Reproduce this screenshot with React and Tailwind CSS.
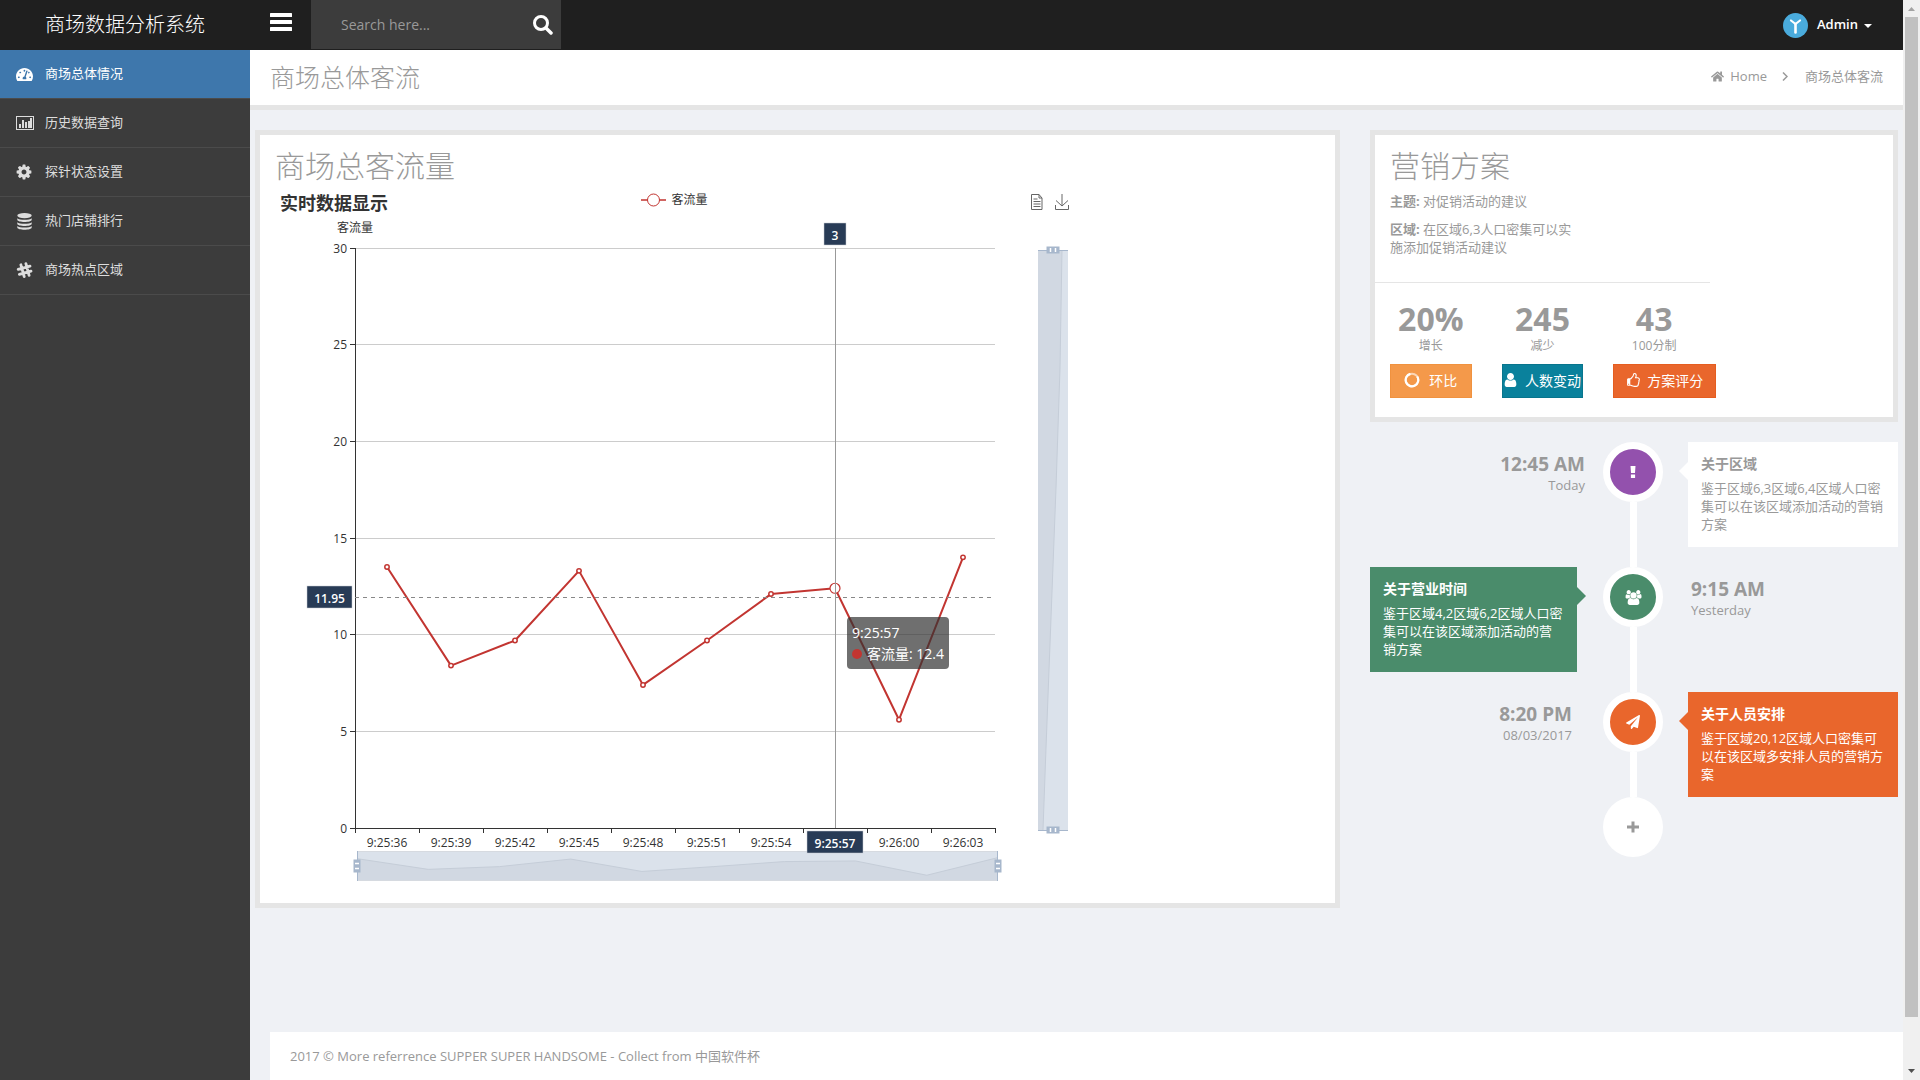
import React from "react";
import { FaTachometerAlt, FaHome, FaPaperPlane } from "react-icons/fa";

const SANS = "font-['Open_Sans','Noto_Sans_CJK_SC',sans-serif]";

function BarChartIcon() {
  return (
    <svg width="18" height="14" viewBox="0 0 18 14" aria-hidden="true">
      <rect x="0.5" y="0.5" width="17" height="13" fill="none" stroke="currentColor" />
      <path d="M3 8h2v4H3zM6 4h2v8H6zM9 6h2v6H9zM12 5h2v7h-2zM14 2h2v10h-2z" fill="currentColor" />
    </svg>
  );
}

function CogIcon() {
  return (
    <svg width="16" height="16" viewBox="64 64 1664 1664" fill="currentColor" aria-hidden="true">
      <path d="M1152 896q0-106-75-181t-181-75-181 75-75 181 75 181 181 75 181-75 75-181zm512-109v222q0 12-8 23t-20 13l-185 28q-19 54-39 91 35 50 107 138 10 12 10 25t-9 23q-27 37-99 108t-94 71q-12 0-26-9l-138-108q-44 23-91 38-16 136-29 186-7 28-36 28h-222q-14 0-24.500-8.500t-11.500-21.500l-28-184q-49-16-90-37l-141 107q-10 9-25 9-14 0-25-11-126-114-165-168-7-10-7-23 0-12 8-23 15-21 51-66.500t54-70.500q-27-50-41-99l-183-27q-13-2-21-12.500t-8-23.500v-222q0-12 8-23t19-13l186-28q14-46 39-92-40-57-107-138-10-12-10-24 0-10 9-23 26-36 98.500-107.500t94.500-71.500q13 0 26 10l138 107q44-23 91-38 16-136 29-186 7-28 36-28h222q14 0 24.500 8.500t11.500 21.500l28 184q49 16 90 37l142-107q9-9 24-9 13 0 25 10 129 119 165 170 7 8 7 22 0 12-8 23-15 21-51 66.500t-54 70.500q26 50 41 98l183 28q13 2 21 12.500t8 23.500z" />
    </svg>
  );
}

function HashIcon() {
  return (
    <svg width="17" height="17" viewBox="0 0 17 17" fill="none" stroke="currentColor" strokeWidth="2.800" strokeLinecap="round" aria-hidden="true">
      <path d="M4.900 2.800l3.300 11.800M9.900 1.600l3.200 11.800M2.200 7.400L14 4.200M3.400 12.300l11.600-3.200" />
    </svg>
  );
}

function DatabaseIcon() {
  return (
    <svg className="ml-px" width="15" height="17" viewBox="0 0 15 17" fill="currentColor" aria-hidden="true">
      <ellipse cx="7.5" cy="2.6" rx="7.2" ry="2.6" />
      <path d="M.3 5.2c2 2 12.400 2 14.400 0v1.600c0 3-14.400 3-14.400 0z" />
      <path d="M.3 9.200c2 2 12.400 2 14.400 0v1.600c0 3-14.400 3-14.400 0z" />
      <path d="M.3 13.100c2 2 12.400 2 14.400 0v1.400c0 3-14.400 3-14.400 0z" />
    </svg>
  );
}

function RingIcon() {
  return (
    <svg width="16" height="16" viewBox="0 0 16 16" fill="none" aria-hidden="true">
      <circle cx="8" cy="8" r="6.300" stroke="white" strokeOpacity="0.600" strokeWidth="2" />
      <path d="M6.400 1.900a6.300 6.300 0 1 0 6.800 2.600" stroke="white" strokeWidth="2.200" />
    </svg>
  );
}

function UserIcon() {
  return (
    <svg width="13" height="14" viewBox="256 128 1280 1536" fill="currentColor" aria-hidden="true">
      <path d="M1536 1399q0 109-62.500 187t-150.500 78h-854q-88 0-150.500-78t-62.500-187q0-85 8.500-160.500t31.500-152 58.500-131 94-89 134.500-34.500q131 128 313 128t313-128q76 0 134.500 34.500t94 89 58.500 131 31.500 152 8.500 160.500zm-256-887q0 159-112.500 271.500t-271.500 112.500-271.500-112.500-112.500-271.500 112.500-271.500 271.500-112.500 271.500 112.500 112.500 271.500z" />
    </svg>
  );
}

function ThumbIcon() {
  return (
    <svg width="15" height="15" viewBox="0 0 1792 1792" fill="currentColor" aria-hidden="true">
      <path d="M384 1344q0-26-19-45t-45-19-45 19-19 45 19 45 45 19 45-19 19-45zm1152-576q0-51-39-89.500t-89-38.500h-352q0-58 48-159.500t48-160.500q0-98-32-145t-128-47q-26 26-38 85t-30.500 125.500-59.500 109.500q-22 23-77 91-4 5-23 30t-31.500 41-34.500 42.500-40 44-38.500 35.500-40 27-35.500 9h-32v640h32q13 0 31.500 3t33 6.500 38 11 35 11.500 35.500 12.500 29 10.500q211 73 342 73h121q192 0 192-167 0-26-5-56 30-16 47.500-52.500t17.500-73.500-18-69q53-50 53-119 0-25-10-55.500t-25-47.500q32-1 53.500-47t21.500-81zm128-1q0 89-49 163 9 33 9 69 0 77-38 144 3 21 3 43 0 101-60 178 1 139-85 219.500t-227 80.500h-129q-96 0-189.500-22.500t-216.500-65.500q-116-40-138-40h-288q-53 0-90.500-37.500t-37.500-90.500v-640q0-53 37.500-90.500t90.500-37.500h274q36-24 137-155 58-75 107-128 24-25 35.500-85.500t30.500-126.500 62-108q39-37 90-37 84 0 151 32.500t102 101.500 35 186q0 93-48 192h176q104 0 180 76t76 179z" />
    </svg>
  );
}

function GroupIcon() {
  return (
    <svg width="17" height="15" viewBox="0 0 2048 1792" fill="currentColor" aria-hidden="true">
      <path d="M657 896q-162 5-265 128h-134q-82 0-138-40.500t-56-118.500q0-353 124-353 6 0 43.500 21t97.500 42.500 119 21.500q67 0 133-23-5 37-5 66 0 159 93 287zm1071 637q0 120-73 189.500t-194 69.500h-874q-121 0-194-69.500t-73-189.500q0-53 3.500-103.500t14-109 26.500-108.500 43-97.500 62-81 85.500-53.500 111.500-20q10 0 43 21.500t73 48 107 48 135 21.500 135-21.500 107-48 73-48 43-21.500q61 0 111.500 20t85.500 53.500 62 81 43 97.500 26.500 108.500 14 109 3.500 103.500zm-1024-1277q0 106-75 181t-181 75-181-75-75-181 75-181 181-75 181 75 75 181zm704 384q0 159-112.500 271.500t-271.500 112.500-271.500-112.500-112.500-271.500 112.500-271.500 271.500-112.500 271.500 112.500 112.500 271.500zm576 225q0 78-56 118.500t-138 40.500h-134q-103-123-265-128 93-128 93-287 0-29-5-66 66 23 133 23 59 0 119-21.500t97.500-42.500 43.500-21q124 0 124 353zm-128-609q0 106-75 181t-181 75-181-75-75-181 75-181 181-75 181 75 75 181z" />
    </svg>
  );
}

function ExclamationIcon() {
  return (
    <svg width="6" height="12" viewBox="0 0 6 12" fill="currentColor" aria-hidden="true">
      <path d="M.5 0h5L5 7H1zM.9 8.500h4.200V12H.9z" />
    </svg>
  );
}

function PlusIcon() {
  return (
    <svg width="12" height="12" viewBox="0 0 12 12" fill="currentColor" aria-hidden="true">
      <path d="M4.500.5h3v4H12v3H7.500v4h-3v-4H0v-3h4.500z" />
    </svg>
  );
}

const NAV = [
  { label: "商场总体情况", icon: <FaTachometerAlt size={17} />, active: true },
  { label: "历史数据查询", icon: <BarChartIcon /> },
  { label: "探针状态设置", icon: <CogIcon /> },
  { label: "热门店铺排行", icon: <DatabaseIcon /> },
  { label: "商场热点区域", icon: <HashIcon /> },
];

function Navbar() {
  return (
    <header className="flex h-[50px] bg-[#1f1f1f] text-white">
      <a href="#" className="w-[250px] pl-[45px] text-[20px] leading-[50px] font-light">商场数据分析系统</a>
      <button type="button" aria-label="切换菜单" className="flex h-11 w-[61px] items-center pl-[20px]">
        <svg width="22" height="18" viewBox="0 0 22 18" fill="white" aria-hidden="true">
          <rect width="22" height="4" rx="0.500" />
          <rect y="7" width="22" height="4" rx="0.500" />
          <rect y="14" width="22" height="4" rx="0.500" />
        </svg>
      </button>
      <form className="flex h-[49px] w-[250px] items-center bg-[#3c3c3c] pr-2" onSubmit={(e) => e.preventDefault()}>
        <input
          type="text"
          aria-label="Search"
          placeholder="Search here..."
          className="h-full min-w-0 flex-1 bg-transparent pl-[30px] text-[14px] outline-none placeholder:text-[#999999]"
        />
        <button type="submit" aria-label="Search">
          <svg width="20" height="20" viewBox="0 0 20 20" fill="none" stroke="white" aria-hidden="true">
            <circle cx="8" cy="8" r="6.500" strokeWidth="3" />
            <path d="M13 13l5 5" strokeWidth="3.500" strokeLinecap="round" />
          </svg>
        </button>
      </form>
      <button type="button" className="ml-auto mr-[31px] flex items-center text-[13px] font-semibold">
        <svg width="25" height="25" viewBox="0 0 25 25" aria-hidden="true">
          <circle cx="12.500" cy="12.500" r="12.500" fill="#4aabdc" />
          <path d="M12.500 11L8 7.500M12.500 11L17 7.500" stroke="white" strokeWidth="2.200" strokeLinecap="round" />
          <path d="M12.500 11v8.500" stroke="white" strokeWidth="2.600" strokeLinecap="round" />
        </svg>
        <span className="ml-[9px]">Admin</span>
        <svg className="ml-[6px] mt-0.5" width="8" height="4" viewBox="0 0 8 4" aria-hidden="true">
          <path d="M0 0h8L4 4z" fill="white" />
        </svg>
      </button>
    </header>
  );
}

function Sidebar() {
  return (
    <nav className="w-[250px] shrink-0 bg-[#3c3c3c] text-[13px]">
      <ul>
        {NAV.map((item) => (
          <li key={item.label} className="border-b border-[#4b4b4b]">
            <a
              href="#"
              className={
                item.active
                  ? "flex h-12 items-center bg-[#3e77ac] pl-4 text-white"
                  : "flex h-12 items-center pl-4 text-[#dddddd]"
              }
            >
              <span className="flex w-[29px]">{item.icon}</span>
              {item.label}
            </a>
          </li>
        ))}
      </ul>
    </nav>
  );
}

const POINTS = [
  ["9:25:36", 13.5],
  ["9:25:39", 8.4],
  ["9:25:42", 9.7],
  ["9:25:45", 13.3],
  ["9:25:48", 7.4],
  ["9:25:51", 9.7],
  ["9:25:54", 12.1],
  ["9:25:57", 12.4],
  ["9:26:00", 5.6],
  ["9:26:03", 14],
];
const LEFT = 80;
const BASE = 640;
const SCALE = 580 / 30;
const px = (i) => LEFT + 32 + i * 64;
const py = (v) => BASE - v * SCALE;
const LINE = POINTS.map(([, v], i) => `${px(i)},${py(v)}`).join(" ");
const MINI = POINTS.map(([, v], i) => `${82 + (i * 641) / 9},${699 - v * 2.1}`).join(" ");

function Handle({ x, y, vertical }) {
  return (
    <g transform={vertical ? `translate(${x} ${y}) rotate(90)` : `translate(${x} ${y})`}>
      <rect x="-3.500" y="-6.500" width="7" height="13" fill="#a7b7cc" />
      <path d="M-2 -2.500h4M-2 2.500h4" stroke="#ffffff" strokeWidth="1.500" />
    </g>
  );
}

function Tag({ x, y, w, children }) {
  return (
    <g>
      <rect x={x} y={y} width={w} height="22" fill="#283b56" stroke="#c8ccd2" strokeWidth="0.500" />
      <text x={x + w / 2} y={y + 17} textAnchor="middle" fill="white" fontWeight="600">{children}</text>
    </g>
  );
}

function FlowChart() {
  return (
    <div className="relative w-[800px] text-[#333333]">
      <div className="absolute inset-x-0 top-0 grid grid-cols-3 items-start pl-[5px] pr-[6px]">
        <h3 className="text-[18px] leading-[30px] font-bold">实时数据显示</h3>
        <button type="button" className="flex items-center justify-center gap-[5px] text-[12px] leading-6">
          <svg width="25" height="14" viewBox="0 0 25 14" fill="none" stroke="#c23531" aria-hidden="true">
            <path d="M0 7h6.500M18.500 7H25" strokeWidth="1.500" />
            <circle cx="12.500" cy="7" r="6" />
          </svg>
          客流量
        </button>
        <div className="flex justify-end gap-3 pt-[6px]">
          <button type="button" aria-label="数据视图">
            <svg width="12" height="16" viewBox="0 0 12 16" fill="none" stroke="#666666" aria-hidden="true">
              <path d="M.5.5h7.500l3 3.500v11.500H.5zM8 .5V4h3M2.500 5h4M2.500 7.500h7M2.500 10h7M2.500 12.500h7" />
            </svg>
          </button>
          <button type="button" aria-label="保存为图片">
            <svg width="14" height="16" viewBox="0 0 14 16" fill="none" stroke="#666666" aria-hidden="true">
              <path d="M.5 11v4.500h13V11M7 0v12M1 6.500l6 5.500 6-5.500" />
            </svg>
          </button>
        </div>
      </div>
      <svg width="800" height="700" viewBox="0 0 800 700" className="block text-[12px]" fill="#333333" role="img" aria-label="客流量">
        <text x="80" y="44" textAnchor="middle">客流量</text>
        {[0, 5, 10, 15, 20, 25, 30].map((v) => {
          const y = Math.floor(py(v)) + 0.5;
          return (
            <g key={v}>
              {v > 0 && <path d={`M81 ${y}H720`} stroke="#cccccc" />}
              <path d={`M75 ${y}H80`} stroke="#333333" />
              <text x="72" y={y + 4.500} textAnchor="end">{v}</text>
            </g>
          );
        })}
        <path d="M80.500 60V645M80 640.500H721" stroke="#333333" fill="none" />
        {POINTS.map(([t], i) => (
          <g key={t}>
            <path d={`M${144.500 + i * 64} 640v5`} stroke="#333333" />
            <text x={px(i)} y="659" textAnchor="middle">{t}</text>
          </g>
        ))}

        <rect x="82" y="663" width="641" height="30" fill="#dbe2eb" />
        <polygon points={`82,693 ${MINI} 723,693`} fill="#d1d8e2" />
        <polyline points={MINI} fill="none" stroke="#c5cdd8" />
        <path d="M82 663.500h641M82 692.500h641" stroke="#d6dae0" />
        <path d="M82.500 663v30M722.500 663v30" stroke="#a7b7cc" />
        <Handle x={82} y={678} />
        <Handle x={723} y={678} />

        <rect x="763" y="62" width="30" height="580" fill="#dbe2eb" />
        <polygon points="763,62 787,62 785,180 781,300 776,430 771,560 768,642 763,642" fill="#d1d8e2" />
        <polyline points="787,62 785,180 781,300 776,430 771,560 768,642" fill="none" stroke="#c5cdd8" />
        <path d="M763 62.500h30M763 642.500h30" stroke="#a7b7cc" />
        <Handle x={778} y={62} vertical />
        <Handle x={778} y={642} vertical />

        <polyline points={LINE} fill="none" stroke="#c23531" strokeWidth="2" strokeLinejoin="bevel" />
        {POINTS.map(([t, v], i) => (
          <circle key={t} cx={px(i)} cy={py(v)} r={i === 7 ? 5 : 2.2} fill="white" stroke="#c23531" strokeWidth={i === 7 ? 1.2 : 1.5} />
        ))}
        <path d="M80 409.500H720" stroke="#888888" strokeDasharray="4 4" />
        <path d="M560.500 60V640" stroke="#999999" />
        <Tag x={32} y={398} w={45}>11.95</Tag>
        <Tag x={549} y={35} w={22}>3</Tag>
        <Tag x={532} y={643} w={56}>9:25:57</Tag>
      </svg>
      <div className="absolute left-[572px] top-[429px] rounded bg-[#323232]/70 p-[5px] text-[14px] leading-[21px] whitespace-nowrap text-white">
        9:25:57
        <div className="flex items-center gap-[5px]">
          <span className="size-[10px] rounded-full bg-[#c23531]" />
          客流量: 12.4
        </div>
      </div>
    </div>
  );
}

const STATS = [
  { value: "20%", label: "增长", action: "环比", style: "w-full gap-[9px] bg-[#f4994a] border-[#f0923f]", icon: <RingIcon /> },
  { value: "245", label: "减少", action: "人数变动", style: "w-full gap-2 bg-[#0a819c] border-[#08758d]", icon: <UserIcon /> },
  { value: "43", label: "100分制", action: "方案评分", style: "w-[103px] gap-[6px] bg-[#e9662c] border-[#e55d20]", icon: <ThumbIcon /> },
];

function PlanCard() {
  return (
    <section className="h-[292px] border-[5px] border-[#e5e5e5] bg-white pt-[14px]">
      <h2 className="px-[15px] text-[30px] leading-[34px] font-light">营销方案</h2>
      <div className="mt-[9px] w-[217px] px-[15px] text-[13px] leading-[18px]">
        <p><strong>主题:</strong> 对促销活动的建议</p>
        <p className="mt-[10px]"><strong>区域:</strong> 在区域6,3人口密集可以实施添加促销活动建议</p>
      </div>
      <div className="mt-[26px] grid w-[335px] grid-cols-3 border-t border-[#e5e5e5] pt-[17px]">
        {STATS.map((s) => (
          <div key={s.value} className="px-[15px] text-center">
            <div className="text-[32px] leading-[38px] font-bold">{s.value}</div>
            <div className="text-[12px] leading-4">{s.label}</div>
            <button type="button" className={`mt-[10px] flex h-[34px] items-center justify-center border pb-0.5 text-[14px] whitespace-nowrap text-white ${s.style}`}>
              {s.icon}
              {s.action}
            </button>
          </div>
        ))}
      </div>
    </section>
  );
}

const EVENTS = [
  { side: "right", time: "12:45 AM", day: "Today", title: "关于区域", text: "鉴于区域6,3区域6,4区域人口密集可以在该区域添加活动的营销方案", icon: <ExclamationIcon />, dot: "bg-[#9351ad]", box: "bg-white", arrow: "text-white", pad: "pr-[18px]" },
  { side: "left", time: "9:15 AM", day: "Yesterday", title: "关于营业时间", text: "鉴于区域4,2区域6,2区域人口密集可以在该区域添加活动的营销方案", icon: <GroupIcon />, dot: "bg-[#4a8c6b]", box: "bg-[#4a8c6b] text-white", arrow: "text-[#4a8c6b]", pad: "pl-7" },
  { side: "right", time: "8:20 PM", day: "08/03/2017", title: "关于人员安排", text: "鉴于区域20,12区域人口密集可以在该区域多安排人员的营销方案", icon: <FaPaperPlane size={14} />, dot: "bg-[#e9662c]", box: "bg-[#e9662c] text-white", arrow: "text-[#e9662c]", pad: "pr-[31px]" },
];

function EventBox({ e }) {
  const right = e.side === "right";
  return (
    <article className={`relative h-[105px] px-[13px] pt-3 ${right ? "ml-[25px]" : "mr-[26px]"} ${e.box}`}>
      <svg
        width="9"
        height="18"
        viewBox="0 0 9 18"
        aria-hidden="true"
        className={`absolute top-5 ${right ? "right-full" : "left-full"} ${e.arrow}`}
      >
        <path d={right ? "M9 0v18L0 9z" : "M0 0v18l9-9z"} fill="currentColor" />
      </svg>
      <h4 className="text-[14px] leading-5 font-semibold">{e.title}</h4>
      <p className="mt-[5px] text-[13px] leading-[18px]">{e.text}</p>
    </article>
  );
}

function EventTime({ e }) {
  return (
    <div className={`pt-3 ${e.pad} ${e.side === "right" ? "text-right" : ""}`}>
      <div className="text-[19px] leading-5 font-bold">{e.time}</div>
      <div className="mt-px text-[13px] leading-5">{e.day}</div>
    </div>
  );
}

function Timeline() {
  return (
    <section className="mt-5">
      {EVENTS.map((e, i) => (
        <div key={e.time} className="grid grid-cols-[233fr_60px_235fr]">
          {e.side === "right" ? <EventTime e={e} /> : <EventBox e={e} />}
          <div className="flex flex-col items-center">
            <div className={`flex size-[60px] items-center justify-center rounded-full border-[7px] border-white text-white ${e.dot}`}>{e.icon}</div>
            <div className={i === 2 ? "h-[45px] w-[7px] bg-white" : "h-[65px] w-[7px] bg-white"} />
          </div>
          {e.side === "right" ? <EventBox e={e} /> : <EventTime e={e} />}
        </div>
      ))}
      <div className="grid grid-cols-[233fr_60px_235fr]">
        <button type="button" aria-label="添加" className="col-start-2 flex size-[60px] items-center justify-center rounded-full bg-white">
          <PlusIcon />
        </button>
      </div>
    </section>
  );
}

function ScrollRail() {
  return (
    <div className="sticky top-0 flex h-screen w-[17px] shrink-0 flex-col items-center justify-between bg-[#f0f0f0]" aria-hidden="true">
      <svg width="17" height="17" viewBox="0 0 17 17" className="shrink-0"><path d="M5 11h7L8.500 7z" fill="#a3a3a3" /></svg>
      <div className="mb-[46px] w-[13px] flex-1 bg-[#c1c1c1]" />
      <svg width="17" height="17" viewBox="0 0 17 17" className="shrink-0"><path d="M5 6h7l-3.500 4z" fill="#505050" /></svg>
    </div>
  );
}

export default function App() {
  return (
    <div className={`flex min-h-screen bg-[#eff1f5] text-[#999999] ${SANS}`} lang="zh-CN">
      <div className="flex min-w-0 flex-1 flex-col">
        <Navbar />
        <div className="flex flex-1">
          <Sidebar />
          <div className="flex min-w-0 flex-1 flex-col">
            <div className="flex h-[60px] items-center justify-between border-b-[5px] border-[#e5e5e5] bg-white px-5 pb-0.5">
              <h1 className="text-[25px] leading-[30px] font-light">商场总体客流</h1>
              <nav className="flex items-center text-[13px]">
                <a href="#" className="flex items-center gap-[6px]">
                  <FaHome size={13} />
                  Home
                </a>
                <svg className="ml-[15px] mr-[17px]" width="6" height="9" viewBox="0 0 6 9" fill="none" stroke="currentColor" strokeWidth="1.500" aria-hidden="true">
                  <path d="M1 .5l4 4-4 4" />
                </svg>
                <a href="#">商场总体客流</a>
              </nav>
            </div>
            <main className="grid flex-1 grid-cols-[1085fr_528fr] items-start gap-[30px] px-[5px] pt-5">
              <section className="min-w-0 border-[5px] border-[#e5e5e5] bg-white px-[15px] pt-[14px] pb-[15px]">
                <h2 className="mb-[5px] text-[30px] leading-[34px] font-light">商场总客流量</h2>
                <FlowChart />
              </section>
              <div className="min-w-0">
                <PlanCard />
                <Timeline />
              </div>
            </main>
            <footer className="ml-5 h-12 bg-white pl-5 text-[13px] leading-[48px]">
              2017 © More referrence SUPPER SUPER HANDSOME - Collect from 中国软件杯
            </footer>
          </div>
        </div>
      </div>
      <ScrollRail />
    </div>
  );
}
